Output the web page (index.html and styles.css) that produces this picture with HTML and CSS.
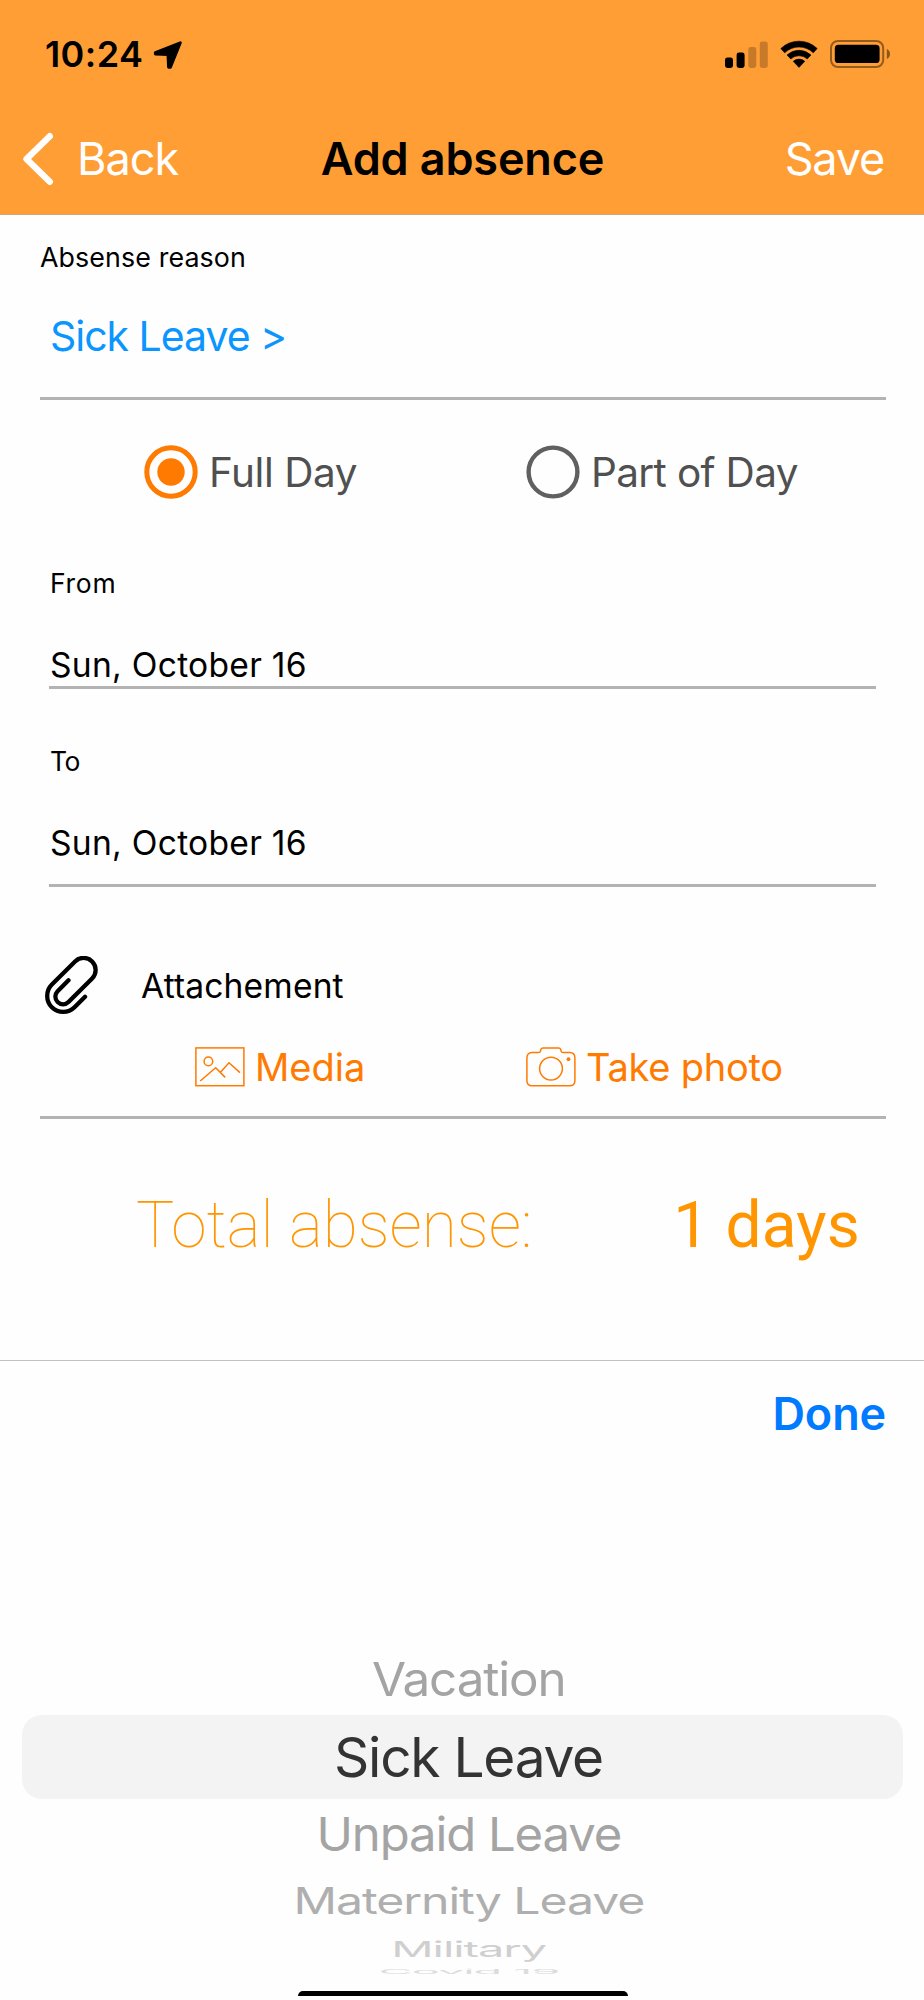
FILE: index.html
```
<!DOCTYPE html>
<html lang="en">
<head>
<meta charset="utf-8">
<title>Add absence</title>
<link rel="stylesheet" href="styles.css">
</head>
<body>
<div class="screen">
  <header class="header">
    <div class="status">
      <span class="time">10:24</span>
      <svg class="location" width="30" height="30" viewBox="0 0 30 30"><path d="M27.3 2.8 17.4 27.2H15.6L15 14.6 2.4 14V12.7Z" fill="#000" stroke="#000" stroke-width="3" stroke-linejoin="round"/></svg>
      <div class="status-icons">
        <svg width="43" height="27" viewBox="0 0 43 27"><rect x="0" y="16.6" width="8" height="10.4" rx="2.4"/><rect x="11.6" y="11.6" width="8" height="15.4" rx="2.4"/><g opacity=".22"><rect x="23.3" y="6" width="8" height="21" rx="2.4"/><rect x="34.8" y="0.6" width="8" height="26.4" rx="2.4"/></g></svg>
        <svg class="wifi" width="38" height="28" viewBox="0 0 38 28"><path d="M0.8 8.6A26 26 0 0 1 37.2 8.6L33.3 12.8A20.6 20.6 0 0 0 4.7 12.8ZM7 15A17.6 17.6 0 0 1 31 15L27.2 19A12 12 0 0 0 10.8 19ZM13.2 21.3A8.8 8.8 0 0 1 24.8 21.3L19 27.4Z" stroke="#000" stroke-width=".6" stroke-linejoin="round"/></svg>
        <svg class="battery" width="61" height="28" viewBox="0 0 61 28"><rect x="1" y="1" width="52.2" height="26" rx="7" fill="none" stroke="#000" stroke-opacity=".42" stroke-width="2"/><rect x="4.8" y="4.8" width="44.8" height="18.2" rx="3.6"/><path d="M56.8 9Q60 10.4 60 14T56.8 19Z" fill-opacity=".45"/></svg>
      </div>
    </div>
    <nav class="nav">
      <a class="back"><svg width="32" height="54" viewBox="0 0 32 54"><path d="M27.8 4.2 4.5 27 27.8 49.8" fill="none" stroke="#fff" stroke-width="6.4" stroke-linecap="round" stroke-linejoin="round"/></svg><span>Back</span></a>
      <h1 class="title">Add absence</h1>
      <a class="save">Save</a>
    </nav>
  </header>

  <main class="form">
    <section class="reason">
      <div class="label">Absense reason</div>
      <a class="reason-link">Sick Leave &gt;</a>
    </section>

    <div class="radios">
      <label class="radio"><svg width="54" height="54" viewBox="0 0 54 54"><circle cx="27" cy="27" r="24.2" fill="none" stroke="#ff7a00" stroke-width="5"/><circle cx="27" cy="27" r="13.7" fill="#ff7a00"/></svg><span>Full Day</span></label>
      <label class="radio part"><svg width="54" height="54" viewBox="0 0 54 54"><circle cx="27" cy="27" r="24.4" fill="none" stroke="#606060" stroke-width="4.4"/></svg><span>Part of Day</span></label>
    </div>

    <section class="date from">
      <div class="label">From</div>
      <div class="value">Sun, October 16</div>
    </section>
    <section class="date to">
      <div class="label">To</div>
      <div class="value">Sun, October 16</div>
    </section>

    <section class="attachment">
      <div class="attachment-head">
        <svg width="53" height="60" viewBox="5 11 53 60"><path transform="rotate(45)" d="M45.1 4.8V20.2a7.7 7.7 0 0 0 15.4 0V-13.2a12.05 12.05 0 0 0-24.1 0V19.6a16 16 0 0 0 32 0V4.7" fill="none" stroke="#000" stroke-width="4.3" stroke-linecap="round"/></svg>
        <span>Attachement</span>
      </div>
      <div class="actions">
        <a class="action"><svg width="50" height="40" viewBox="0 0 50 40"><g fill="none" stroke="#ff7a00" stroke-width="1.5"><rect x=".9" y=".9" width="48" height="37.8"/><circle cx="13.4" cy="14.4" r="4.3"/><path d="M5.2 34 20.7 20.8 30.2 30.4M25.5 25.3 34 15.8 45 25.6"/></g></svg><span>Media</span></a>
        <a class="action photo"><svg width="50" height="40" viewBox="0 0 50 40"><g fill="none" stroke="#ff7a00" stroke-width="1.5"><path d="M6 5.6H12.5Q14.2 5.6 14.6 3.8L14.9 2.4Q15.3.9 17 .9H32.6Q34.3.9 34.7 2.4L35 3.8Q35.4 5.6 37.1 5.6H43.6Q48.9 5.6 48.9 10.9V33.4Q48.9 38.7 43.6 38.7H6Q.9 38.7.9 33.4V10.9Q.9 5.6 6 5.6Z"/><circle cx="25" cy="21.6" r="11.4"/></g><circle cx="42.5" cy="12.2" r="1.9" fill="#ff7a00"/></svg><span>Take photo</span></a>
      </div>
    </section>

    <div class="total"><span class="total-label">Total absense:</span><span class="total-value">1 days</span></div>
  </main>

  <section class="sheet">
    <div class="toolbar"><a class="done">Done</a></div>
    <div class="wheel">
      <div class="item near"><span class="vacation">Vacation</span></div>
      <div class="item selected"><span>Sick Leave</span></div>
      <div class="item near"><span class="unpaid">Unpaid Leave</span></div>
      <div class="item far"><span class="maternity">Maternity Leave</span></div>
      <div class="item farther"><span class="military">Military</span></div>
      <div class="item edge"><span class="covid">Covid 19</span></div>
    </div>
    <div class="home-bar"></div>
  </section>
</div>
</body>
</html>
```
FILE: styles.css
```
* { box-sizing: border-box; }
body { margin: 0; background: #fefefe; color: #000; font-family: Inter, "Liberation Sans", sans-serif; }
svg { display: block; flex: none; }
span, a { white-space: nowrap; }

.screen { width: 924px; height: 2000px; display: flex; flex-direction: column; overflow: hidden; }

.header { height: 215px; background: #ff9e35; border-bottom: 1px solid #d0a878; }
.status { height: 108px; display: flex; align-items: center; padding: 0 33px 0 45px; }
.time { font-size: 36px; font-weight: 600; letter-spacing: .4px; }
.location { margin-left: 10px; margin-top: 2px; }
.status-icons { display: flex; align-items: center; margin-left: auto; }
.wifi { margin-left: 12px; }
.battery { margin-left: 12px; }

.nav { height: 102px; display: grid; grid-template-columns: 1fr auto 1fr; align-items: center; padding: 0 40px 0 22px; font-size: 45px; line-height: 54px; color: #fff; }
.back { display: flex; align-items: center; letter-spacing: -1px; }
.back span { margin-left: 23px; }
.title { margin: 0 0 0 19px; font-size: 45px; font-weight: 600; letter-spacing: -.16px; color: #000; }
.save { justify-self: end; letter-spacing: -1.2px; }

.form { height: 1145px; padding: 25px 38px 0 40px; }
.label { font-size: 26.8px; line-height: 34px; letter-spacing: .11px; }
.reason { height: 160px; border-bottom: 3px solid #b3b3b3; }
.reason-link { display: block; margin: 42px 0 0 10px; font-size: 41px; line-height: 40px; letter-spacing: -1.02px; color: #0a95ff; }

.radios { display: flex; margin-top: 45px; padding-left: 104px; font-size: 40.5px; line-height: 54px; color: #505050; }
.radio { display: flex; flex: none; width: 382px; gap: 11px; letter-spacing: -.45px; }
.radio span { padding-top: 1px; margin-bottom: -1px; }
.part { width: auto; letter-spacing: -.65px; }

.date { margin: 0 10px 0 9px; border-bottom: 3px solid #b3b3b3; }
.from { height: 123px; margin-top: 67px; }
.to { height: 143px; margin-top: 55px; }
.date .label { padding-left: 1px; font-size: 26.5px; }
.from .label { letter-spacing: .7px; }
.to .label { letter-spacing: -.5px; }
.value { margin-top: 45px; padding-left: 1px; font-size: 33.6px; line-height: 40px; letter-spacing: .28px; }

.attachment { height: 163px; margin-top: 69px; border-bottom: 3px solid #b3b3b3; }
.attachment-head { display: flex; align-items: center; height: 60px; padding-left: 5px; font-size: 33.6px; line-height: 40px; letter-spacing: .15px; }
.attachment-head span { margin-left: 43px; }
.actions { display: flex; margin-top: 31px; padding-left: 155px; font-size: 38px; line-height: 40px; color: #ff7a00; }
.action { display: flex; flex: none; width: 331px; gap: 10px; }
.photo { width: auto; letter-spacing: -.25px; }

.total { display: flex; justify-content: space-between; margin-top: 69px; padding: 0 26px 0 96px; font: 64px/76px Roboto, "Liberation Sans", sans-serif; color: #ff9500; }
.total-label { font-weight: 100; }
.total-value { letter-spacing: .19px; }

.sheet { height: 640px; border-top: 1px solid #c2c2c2; }
.toolbar { height: 106px; display: flex; justify-content: flex-end; padding-right: 38px; font-size: 45px; font-weight: 600; line-height: 106px; letter-spacing: -.14px; color: #007aff; }

.wheel { display: flex; flex-direction: column; margin-top: 177px; padding: 0 21px 0 22px; }
.item { display: flex; align-items: center; justify-content: center; padding-left: 12px; font-size: 55px; line-height: 1; letter-spacing: -1.25px; }
.near { height: 71px; color: #a4a4a4; }
.selected { height: 84px; border-radius: 20px; background: #f3f3f3; color: #333; }
.far { height: 63px; color: #afafaf; }
.farther { height: 32px; color: #cfcfcf; }
.edge { height: 14px; color: #dcdcdc; }
.vacation { transform: scale(.898, .85); }
.unpaid { transform: scale(.892, .85); }
.maternity { transform: scale(.877, .665); }
.military { transform: scale(.854, .4); }
.covid { transform: translateY(-1px) scale(.853, .12); }

.home-bar { width: 330px; height: 5px; margin: 12px auto 0 298px; border-radius: 6px 6px 0 0; background: #000; }
```
